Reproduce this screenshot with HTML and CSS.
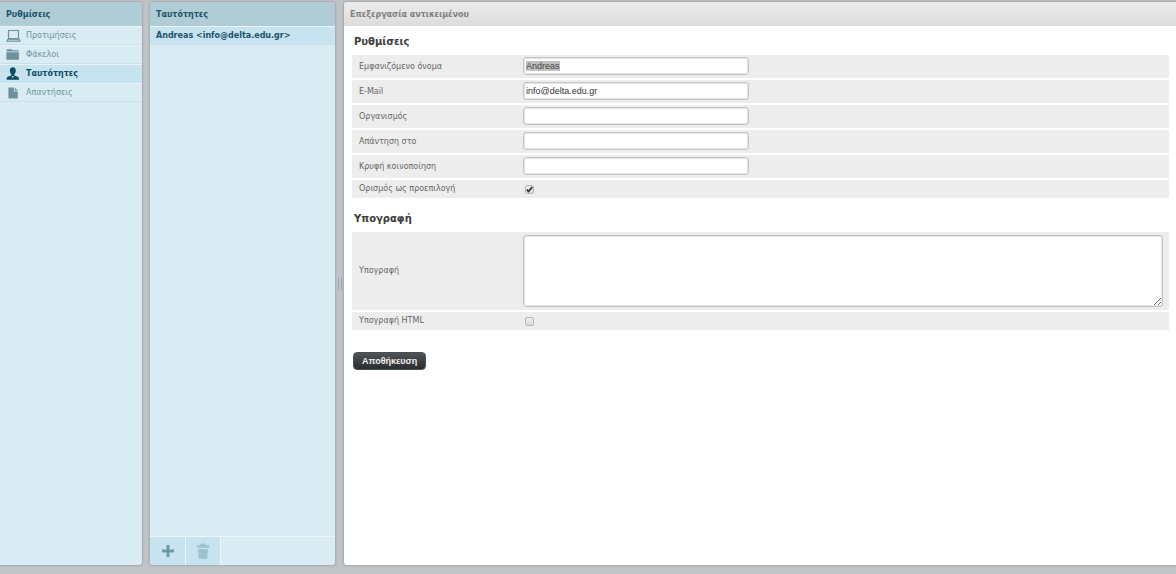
FILE: index.html
```html
<!DOCTYPE html>
<html lang="el">
<head>
<meta charset="utf-8">
<meta name="viewport" content="width=device-width, initial-scale=1">
<title>Ταυτότητες</title>
<link rel="stylesheet" href="styles.css">
</head>
<body>
<div class="layout">
  <nav class="panel sections">
    <h2 class="panel-title">Ρυθμίσεις</h2>
    <ul class="list">
      <li><a class="item" href="#preferences">
        <svg class="icon" viewBox="0 0 15 14"><path fill="none" stroke="currentColor" stroke-width="1.200" d="M2.500 1.500h10v8h-10z"/><path fill="currentColor" d="M1.200 10h12.600l1 2.800H.2z"/><path stroke="#d9ecf4" stroke-width=".7" d="M2 11.300h11"/></svg>
        Προτιμήσεις</a></li>
      <li><a class="item" href="#folders">
        <svg class="icon" viewBox="0 0 15 14"><path fill="currentColor" d="M.7 3.500V1.800q0-.6.6-.6h4.200l1 1h5.500q.6 0 .6.600v.700zM.3 4.200h12.600v7q0 .6-.6.600H.9q-.6 0-.6-.6z"/></svg>
        Φάκελοι</a></li>
      <li><a class="item selected" href="#identities" aria-current="page">
        <svg class="icon" viewBox="0 0 15 14"><path fill="currentColor" d="M6.800.3C8.800.3 10 1.500 9.800 3.700 9.600 5.500 9 6.500 8.300 7.200v1.200c1.800.6 4.400 1 4.700 3.100v1.300H.6v-1.300c.3-2.100 2.900-2.500 4.700-3.100V7.200C4.600 6.500 4 5.500 3.800 3.700 3.600 1.500 4.800.3 6.800.3z"/><path fill="#c7e3ef" d="M5.300 9.300h3L6.800 11z"/></svg>
        Ταυτότητες</a></li>
      <li><a class="item" href="#responses">
        <svg class="icon" viewBox="0 0 15 14"><path fill="currentColor" d="M2.400 1.500h5.600v4h3.800v7H2.400z"/><path fill="currentColor" d="M8.800 1.500l3 3.200h-3z"/></svg>
        Απαντήσεις</a></li>
    </ul>
  </nav>

  <section class="panel identities">
    <h2 class="panel-title">Ταυτότητες</h2>
    <ul class="list">
      <li><a class="item entry" href="#andreas">Andreas &lt;info@delta.edu.gr&gt;</a></li>
    </ul>
    <div class="toolbar">
      <button class="tool" type="button" aria-label="Προσθήκη"><svg class="tool-icon" viewBox="0 0 14 16"><path fill="#6b99a3" d="M5.500 2h3v4.500H13v3H8.500V14h-3V9.500H1v-3h4.500z"/></svg></button>
      <button class="tool" type="button" aria-label="Διαγραφή" disabled><svg class="tool-icon" viewBox="0 0 14 16"><path fill="#9dc3cf" d="M.8 4.800V3q0-.8.8-.8H4Q4.300.5 5.500.5h3q1.200 0 1.500 1.700h2.400q.8 0 .8.8v1.800zM2 6h10l-.8 9q0 .7-.8.7H3.600q-.8 0-.8-.7z"/></svg></button>
    </div>
  </section>

  <div class="splitter" role="separator" aria-orientation="vertical"><span class="grip"></span></div>

  <main class="panel editor">
    <h1 class="panel-title editor-title">Επεξεργασία αντικειμένου</h1>
    <form class="form">
      <h3 class="legend">Ρυθμίσεις</h3>
      <table class="fields">
        <tr><th scope="row"><label for="name">Εμφανιζόμενο όνομα</label></th><td><input class="text" id="name" type="text" value="Andreas"></td></tr>
        <tr><th scope="row"><label for="email">E-Mail</label></th><td><input class="text" id="email" type="text" value="info@delta.edu.gr"></td></tr>
        <tr><th scope="row"><label for="org">Οργανισμός</label></th><td><input class="text" id="org" type="text"></td></tr>
        <tr><th scope="row"><label for="reply">Απάντηση στο</label></th><td><input class="text" id="reply" type="text"></td></tr>
        <tr><th scope="row"><label for="bcc">Κρυφή κοινοποίηση</label></th><td><input class="text" id="bcc" type="text"></td></tr>
        <tr class="short"><th scope="row"><label for="default">Ορισμός ως προεπιλογή</label></th><td><span class="check"><input class="box" id="default" type="checkbox" checked><svg class="tick" viewBox="0 0 9 9"><path fill="none" stroke="#333" stroke-width="1.800" d="M1.800 4.600l1.800 1.800L7.300 2"/></svg></span></td></tr>
      </table>
      <h3 class="legend">Υπογραφή</h3>
      <table class="fields">
        <tr><th scope="row"><label for="signature">Υπογραφή</label></th><td class="tall"><textarea class="text area" id="signature"></textarea></td></tr>
        <tr class="short"><th scope="row"><label for="html">Υπογραφή HTML</label></th><td><span class="check"><input class="box" id="html" type="checkbox"></span></td></tr>
      </table>
      <button class="save" type="submit">Αποθήκευση</button>
    </form>
  </main>
</div>
<script src="script.js"></script>
</body>
</html>
```
FILE: styles.css
```css
* { box-sizing: border-box; }

body {
  margin: 0;
  background: #c0c4c7;
  color: #4c4c4c;
  font: 8px/12px "DejaVu Sans", Verdana, sans-serif;
}

.layout {
  display: grid;
  grid-template-columns: 142px 8px 185px 9px minmax(0, 1fr);
  height: 100vh;
  padding: 2px 0 9px;
}

.panel {
  display: flex;
  flex-direction: column;
  min-height: 0;
  overflow: hidden;
  background: #d9ecf4;
  border-radius: 3px;
  box-shadow: 0 0 2px 1px #a5a8aa;
}

.sections { grid-column: 1; border-radius: 0 3px 3px 0; }
.identities { grid-column: 3; }
.editor { grid-column: 5; background: #fff; border-radius: 3px 0 0 3px; }

.panel-title {
  flex: none;
  margin: 0;
  padding: 0 6px;
  height: 24px;
  background: #b0ccd7;
  color: #1b5468;
  font-size: 8px;
  line-height: 25px;
}

.editor-title {
  border-bottom: 1px solid #dfdfdf;
  background: linear-gradient(#ececec, #dcdcdc);
  color: #808080;
}

.list { margin: 0; padding: 0; list-style: none; }

.item {
  display: flex;
  align-items: center;
  gap: 5px;
  height: 19px;
  padding: 0 6px;
  border-top: 1px solid #e8f4f9;
  border-bottom: 1px solid #c9e0e9;
  color: #6f919d;
  text-decoration: none;
}

.icon { flex: none; width: 15px; height: 14px; }

.selected, .entry { background: #c7e3ef; color: #0c4d63; font-weight: bold; }
.entry { color: #1b5468; }

.toolbar {
  display: flex;
  margin-top: auto;
  height: 29px;
  border-top: 1px solid #edf6fa;
}

.tool {
  display: grid;
  place-items: center;
  width: 35px;
  padding: 0;
  border: 0;
  border-right: 1px solid #edf6fa;
  background: #c7e3ef;
}

.tool:first-child { width: 36px; }

.tool-icon { width: 14px; height: 16px; }

.splitter { grid-column: 4; display: grid; place-items: center; }
.grip {
  width: 4px;
  height: 13px;
  border: 1px solid #9fa8ae;
  border-width: 0 1px;
}

.form { padding: 8px 7px 0 8px; }

.legend {
  margin: 0;
  padding: 0 2px 3px;
  color: #3c3c3c;
  font-size: 10px;
  line-height: 16px;
}

.fields {
  width: 100%;
  margin-bottom: 11px;
  border-spacing: 0 2px;
  table-layout: fixed;
}

.fields th {
  width: 167px;
  height: 23px;
  padding: 0 7px;
  background: #ededed;
  color: #666;
  font-size: 8px;
  font-weight: normal;
  text-align: left;
}

.fields td { padding: 2px 6px 3px 4px; background: #ededed; }
.fields .tall { padding-top: 3px; }
.fields .short th { height: 18px; }
.fields .short td { padding: 0 6px; }

.text {
  display: block;
  width: 226px;
  height: 18px;
  padding: 0 2px;
  border: 1px solid #c4c4c4;
  border-radius: 3px;
  outline: 0;
  background: #fff;
  box-shadow: inset 0 0 1px 1px #e4e4e4;
  color: #333;
  font: 9px "Liberation Sans", Arial, sans-serif;
}

.text::selection { background: #c0c0c0; color: #444; }
.area { width: 100%; height: 72px; }

.check { display: grid; width: 9px; height: 9px; }
.check > * { grid-area: 1 / 1; }

.box {
  appearance: none;
  width: 9px;
  height: 9px;
  margin: 0;
  border: 1px solid #b5b5b5;
  border-radius: 2px;
  background: linear-gradient(#eee, #ddd);
}

.tick { width: 9px; height: 9px; pointer-events: none; }

.save {
  display: block;
  height: 18px;
  margin: 20px 1px 0;
  padding: 0 8px;
  border: 1px solid #465054;
  border-radius: 4px;
  background: linear-gradient(#505355, #2b2e30);
  color: #eee;
  font: bold 9px "Liberation Sans", Arial, sans-serif;
}
```
FILE: script.js
```js
const nameField = document.getElementById("name");
nameField.focus();
nameField.select();
```
